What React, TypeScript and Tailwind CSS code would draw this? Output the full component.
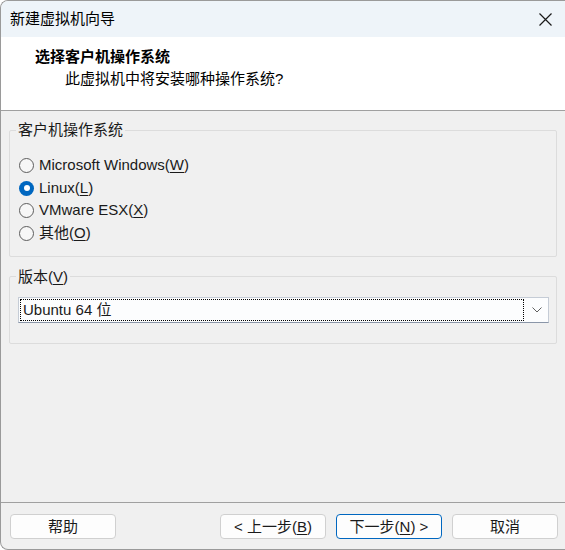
import React from "react";

const FONT = '"Liberation Sans", "Noto Sans CJK SC", sans-serif';

function Mn({ children }: { children: React.ReactNode }) {
  // mnemonic letter
  return <span className="underline underline-offset-2">{children}</span>;
}

function Radio({ checked, children }: { checked?: boolean; children: React.ReactNode }) {
  return (
    <div className="flex h-[22.7px] items-center gap-[5px] pl-[3px]">
      {checked ? (
        <span className="flex h-[15px] w-[15px] items-center justify-center rounded-full bg-[#0067c0]">
          <span className="h-[6px] w-[6px] rounded-full bg-white" />
        </span>
      ) : (
        <span className="h-[15px] w-[15px] rounded-full border border-[#5d5d5d] bg-[#f7f7f7]" />
      )}
      <span>{children}</span>
    </div>
  );
}

function Btn({ primary, children }: { primary?: boolean; children: React.ReactNode }) {
  return (
    <button
      className={
        primary
          ? "h-[25px] w-[106px] rounded-[4px] border border-[#0067c0] bg-[#fdfdfd] text-[15px] leading-none text-[#1a1a1a]"
          : "h-[25px] w-[106px] rounded-[4px] border border-[#d0d0d0] bg-[#fdfdfd] text-[15px] leading-none text-[#1a1a1a]"
      }
    >
      {children}
    </button>
  );
}

export default function App() {
  return (
    <div
      className="flex h-[550px] w-[565px] flex-col overflow-hidden rounded-l-[8px] border-y border-l border-[#9a9a9a] bg-[#f0f0f0] text-[15px] text-[#1a1a1a]"
      style={{ fontFamily: FONT }}
    >
      {/* title bar */}
      <div className="flex h-[36px] shrink-0 items-center justify-between bg-[#eef4f9] pl-[9px] pr-[12px]">
        <span className="leading-5 text-black">新建虚拟机向导</span>
        <svg width="13" height="13" viewBox="0 0 13 13" className="mr-[1px]">
          <path d="M0.5 0.5 L12.5 12.5 M12.5 0.5 L0.5 12.5" stroke="#1a1a1a" strokeWidth="1.2" />
        </svg>
      </div>

      {/* header */}
      <div className="flex h-[74px] shrink-0 flex-col border-b border-[#a0a0a0] bg-white pt-[10px]">
        <div className="pl-[34px] font-bold leading-5 text-black">选择客户机操作系统</div>
        <div className="mt-[2px] pl-[64px] leading-5 text-black">此虚拟机中将安装哪种操作系统?</div>
      </div>

      {/* body */}
      <div className="flex flex-1 flex-col px-[8px] pt-[9px]">
        <fieldset className="rounded-[2px] border border-[#dcdcdc] pb-[11px] pl-[6px] pr-[8px] pt-[14px]">
          <legend className="px-[2px] leading-5">客户机操作系统</legend>
          <Radio>
            Microsoft Windows(<Mn>W</Mn>)
          </Radio>
          <Radio checked>
            Linux(<Mn>L</Mn>)
          </Radio>
          <Radio>
            VMware ESX(<Mn>X</Mn>)
          </Radio>
          <Radio>
            其他(<Mn>O</Mn>)
          </Radio>
        </fieldset>

        <fieldset className="mt-[10px] rounded-[2px] border border-[#dcdcdc] pb-[20px] pl-[6px] pr-[7px] pt-[10px]">
          <legend className="px-[2px] leading-5">
            版本(<Mn>V</Mn>)
          </legend>
          <div className="ml-[2px] flex h-[26px] items-center border border-[#c5ccd6] border-b-[#8a96a8] bg-[#fcfdfe] pl-[1px] pr-[6px]">
            <div className="flex h-[22px] flex-1 items-center border border-dotted border-black pl-[2px] leading-none">
              Ubuntu 64 位
            </div>
            <svg width="10" height="6" viewBox="0 0 10 6" className="ml-[8px]">
              <path d="M0.5 0.5 L5 5 L9.5 0.5" fill="none" stroke="#606060" strokeWidth="1" />
            </svg>
          </div>
        </fieldset>
      </div>

      {/* footer */}
      <div className="flex h-[47px] shrink-0 items-start border-t border-[#a0a0a0] pl-[9px] pr-[7px] pt-[11px]">
        <Btn>帮助</Btn>
        <div className="ml-auto flex gap-[10px]">
          <Btn>
            &lt; 上一步(<Mn>B</Mn>)
          </Btn>
          <Btn primary>
            下一步(<Mn>N</Mn>) &gt;
          </Btn>
          <Btn>取消</Btn>
        </div>
      </div>
    </div>
  );
}
